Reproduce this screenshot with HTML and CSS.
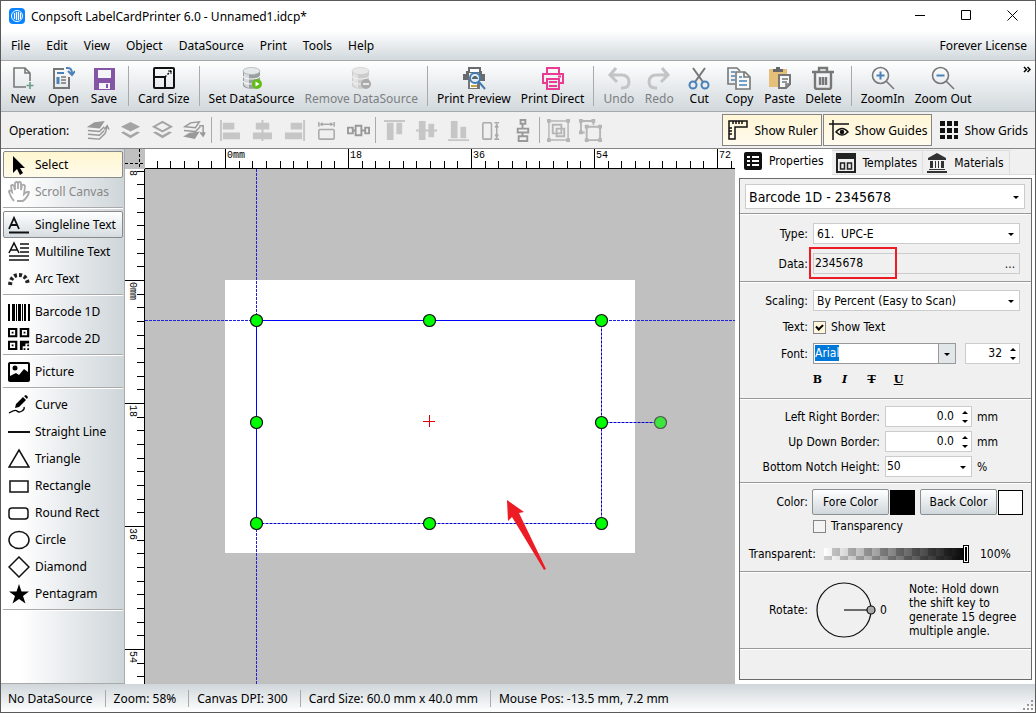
FILE: index.html
```html
<!DOCTYPE html>
<html lang="en">
    <head>
        <meta charset="utf-8">
        <title>Conpsoft LabelCardPrinter 6.0</title>
        <link rel="stylesheet" href="styles.css">
    </head>

    <body>
        <div class="window">
            <header class="titlebar">
                <svg class="app-icon" viewBox="0 0 16 16"><rect width="16" height="16" rx="4" fill="#0a84ff"/><circle cx="8" cy="8" r="5.5" fill="#0a84ff" stroke="#fff"/><path d="M5.5 5v6M7.5 4v8M9.5 4v8M11.5 5v6" stroke="#fff" stroke-width="1.2"/></svg>
                <span class="title">Conpsoft LabelCardPrinter 6.0 - Unnamed1.idcp*</span>
                <button class="win-button" aria-label="Minimize"><svg width="11" height="11"><path d="M0 5.500h10" stroke="#000"/></svg></button>
                <button class="win-button" aria-label="Maximize"><svg width="11" height="11"><path d="M.5.500h9v9h-9z" stroke="#000" fill="none"/></svg></button>
                <button class="win-button" aria-label="Close"><svg width="11" height="11"><path d="M.5.500l10 10M10.500.5l-10 10" stroke="#000"/></svg></button>
            </header>

            <nav class="menubar">
                <button>File</button>
                <button>Edit</button>
                <button>View</button>
                <button>Object</button>
                <button>DataSource</button>
                <button>Print</button>
                <button>Tools</button>
                <button>Help</button>
                <span class="license">Forever License</span>
            </nav>

            <div class="toolbar">
                <button class="tool"><svg viewBox="0 0 24 24" fill="none" stroke="#777" stroke-width="1.6"><path d="M15 21H3V2h11l5 5v8M14 2v5h5"/><path d="M19 16v7M15.500 19.500h7" stroke="#6a9c88"/></svg>New</button>
                <button class="tool"><svg viewBox="0 0 24 24" fill="none" stroke="#777" stroke-width="2"><path d="M13 3H3v19h15V11"/><path d="M6 7h7" stroke="#4a82b8"/><path d="M7 11v7" stroke="#4a82b8" stroke-width="3"/><path d="M10 11h5M10 14h5M10 17h5" stroke-width="1.500"/><path d="M15 2h2q4 0 4 6M17 5l4 4 3-4" stroke="#4a82b8"/></svg>Open</button>
                <button class="tool"><svg viewBox="0 0 24 24"><path d="M2 2h21v22H2z" fill="#8455a5"/><path d="M6 4h13v8H6zM7 17h11v6H7z" fill="#f4f5f6"/><path d="M14 18h2v4h-2z" fill="#8455a5"/></svg>Save</button>
                <i class="divider"></i>
                <button class="tool"><svg viewBox="0 0 24 24" fill="none" stroke="#111" stroke-width="2"><rect x="2" y="2" width="20" height="20" rx="1"/><path d="M2 11h11v11"/><path d="M13 11l7-7" stroke-width="1.500" stroke-dasharray="2 1.500"/><path d="M16 5h3v3" stroke-width="1"/></svg>Card Size</button>
                <i class="divider"></i>
                <button class="tool"><svg viewBox="0 0 24 24"><path d="M3 5v14c0 5 17 5 17 0V5z" fill="#9aa0a2"/><path d="M4 6v13q3 3 5 3V8z" fill="#d6dadb"/><ellipse cx="11.500" cy="5" rx="8.500" ry="3.500" fill="#e6e9ea" stroke="#a7adaf" stroke-width=".7"/><path d="M3 10c0 4 17 4 17 0M3 15c0 4 17 4 17 0" fill="none" stroke="#fff"/><circle cx="17" cy="18" r="5" fill="#62bd19"/><path d="M15.500 15.500v5l4-2.500z" fill="#fff"/></svg>Set DataSource</button>
                <button class="tool" disabled><svg viewBox="0 0 24 24"><path d="M3 5v14c0 5 17 5 17 0V5z" fill="#ccc"/><path d="M4 6v13q3 3 5 3V8z" fill="#e2e2e2"/><ellipse cx="11.500" cy="5" rx="8.500" ry="3.500" fill="#e8e8e8" stroke="#ccc" stroke-width=".7"/><path d="M3 10c0 4 17 4 17 0M3 15c0 4 17 4 17 0" fill="none" stroke="#f4f4f4"/><circle cx="17" cy="18" r="5" fill="#aaa"/><path d="M14 17h6v2h-6z" fill="#e8e8e8"/></svg>Remove DataSource</button>
                <i class="divider"></i>
                <button class="tool"><svg viewBox="0 0 24 24"><path d="M6 1h13v6H6z" fill="#686a6c"/><path d="M8 3h9v3H8z" fill="#fff"/><path d="M1 8h3V5h3v9H1zM17 5h3v3h3v7h-6z" fill="#686a6c"/><path d="M6 13h12v10H6z" fill="#737577"/><path d="M8 15h7v7H8z" fill="#fff"/><path d="M9 20h6" stroke="#c7a13d" stroke-width="2"/><circle cx="13" cy="12" r="5" fill="#e4edf3" stroke="#427cb5" stroke-width="2"/><path d="M10 13h6v-1l-2-2h-2l-2 2z" fill="#59636b"/><path d="M17 16l6 7" stroke="#427cb5" stroke-width="2"/></svg>Print Preview</button>
                <button class="tool"><svg viewBox="0 0 24 24" fill="none" stroke="#e93b91" stroke-width="2"><path d="M6 8V2h12v6M6 17H2V8h20v9h-4"/><path d="M6 13h12v10H6zM8 16h8M8 20h8M17 10.500h3"/></svg>Print Direct</button>
                <i class="divider"></i>
                <button class="tool" disabled><svg viewBox="0 0 24 24" fill="none" stroke="#c2c4c6" stroke-width="3"><path d="M9 2L3 9l7 7M3 9h11q8 0 8 7 0 6-7 6h-1"/></svg>Undo</button>
                <button class="tool" disabled><svg viewBox="0 0 24 24" fill="none" stroke="#c2c4c6" stroke-width="3"><path d="M15 2l6 7-7 7M21 9H10q-8 0-8 7 0 6 7 6h1"/></svg>Redo</button>
                <button class="tool"><svg viewBox="0 0 24 24" fill="none" stroke="#777" stroke-width="2"><path d="M6 2l10 14M18 2L8 16"/><circle cx="6" cy="19" r="3.500" stroke="#4a82b8"/><circle cx="18" cy="19" r="3.500" stroke="#4a82b8"/></svg>Cut</button>
                <button class="tool"><svg viewBox="0 0 24 24" fill="none" stroke="#777" stroke-width="1.600"><path d="M8 18H1V2h9l3 3"/><path d="M4 6h4M4 10h4M4 14h4" stroke="#4a82b8"/><path d="M9 6h9l5 5v12H9z" fill="#f7f8f8"/><path d="M17 6v5h5"/><path d="M12 11h3M12 15h8M12 19h8" stroke="#4a82b8"/></svg>Copy</button>
                <button class="tool"><svg viewBox="0 0 24 24"><path d="M1 3h18v18H1z" fill="#e6bf78"/><path d="M5 6V3h3V1h4v2h3v3z" fill="#666"/><path d="M11 9h11v9l-4 4h-7z" fill="#f7f8f8" stroke="#777" stroke-width="2"/><path d="M14 13h6M14 16h5M18 22v-4h4" stroke="#777" stroke-width="1.500" fill="none"/></svg>Paste</button>
                <button class="tool"><svg viewBox="0 0 24 24" fill="none" stroke="#777" stroke-width="2.400"><path d="M1 6h22M8 6V2h8v4M4 7v14q0 2 2 2h12q2 0 2-2V7M9 11v8M12 11v8M15 11v8"/></svg>Delete</button>
                <i class="divider"></i>
                <button class="tool"><svg viewBox="0 0 24 24" fill="none" stroke="#777" stroke-width="1.600"><circle cx="9.500" cy="9.500" r="8"/><path d="M15 15l8 8"/><path d="M9.500 5.500v8M5.500 9.500h8" stroke="#4a82b8" stroke-width="2"/></svg>ZoomIn</button>
                <button class="tool"><svg viewBox="0 0 24 24" fill="none" stroke="#777" stroke-width="1.600"><circle cx="9.500" cy="9.500" r="8"/><path d="M15 15l8 8"/><path d="M5.500 9.500h8" stroke="#4a82b8" stroke-width="2"/></svg>Zoom Out</button>
                <button class="overflow" aria-label="More"><svg width="8" height="7" fill="none" stroke="#000" stroke-width="1.500"><path d="M1 1l2.500 2.500L1 6M4.500 1L7 3.500 4.500 6"/></svg></button>
            </div>

            <div class="operations">
                <span class="op-label">Operation:</span>
                <button class="op" aria-label="Bring to front" disabled><svg viewBox="0 0 24 24" fill="none" stroke="#999" stroke-width="1.500"><path d="M2 8l6-4 9-1-4 6z" fill="#999"/><path d="M1 12l12 1 5-5M1 16l12 1 5-5M1 20l12 1 6-6 2-7M18 11l3-4 2 4"/></svg></button>
                <button class="op" aria-label="Bring forward" disabled><svg viewBox="0 0 24 24" fill="#a4a4a4"><path d="M12 3l10 5-10 5L2 8z"/><path d="M2 14l3-1 7 4 7-4 3 1-10 6z"/></svg></button>
                <button class="op" aria-label="Send backward" disabled><svg viewBox="0 0 24 24" fill="#a4a4a4"><path d="M12 3l9 5-9 5-9-5z" fill="none" stroke="#a4a4a4" stroke-width="2"/><path d="M2 14l3-1 7 4 7-4 3 1-10 6z"/></svg></button>
                <button class="op" aria-label="Send to back" disabled><svg viewBox="0 0 24 24" fill="none" stroke="#999" stroke-width="1.500"><path d="M2 8l6-4 9-1-4 6zM1 12l12 1 5-5M17 7h4v9"/><path d="M2 18l5-3 9-1-4 6z" fill="#999"/><path d="M18 14l3 4 2-4" fill="#999"/></svg></button>
                <i class="divider"></i>
                <button class="op" aria-label="Align left" disabled><svg viewBox="0 0 24 24" fill="#c6c6c6"><path d="M1 1h2v22H1z"/><path d="M4 4h12v7H4zM4 14h18v7H4z"/></svg></button>
                <button class="op" aria-label="Align center" disabled><svg viewBox="0 0 24 24" fill="#c6c6c6"><path d="M11 1h2v22h-2zM5 4h14v7H5zM2 14h20v7H2z"/></svg></button>
                <button class="op" aria-label="Align right" disabled><svg viewBox="0 0 24 24" fill="#c6c6c6"><path d="M21 1h2v22h-2zM8 4h12v7H8zM2 14h18v7H2z"/></svg></button>
                <button class="op" aria-label="Same width" disabled><svg viewBox="0 0 24 24" fill="none" stroke="#aaa" stroke-width="1.600"><rect x="4" y="11" width="16" height="10" rx="1"/><path d="M4 3v5M20 3v5M6 5.500h12M8 4L6 5.500 8 7M16 4l2 1.500L16 7"/></svg></button>
                <button class="op" aria-label="Space across" disabled><svg viewBox="0 0 24 24" fill="none" stroke="#999" stroke-width="2"><path d="M1 9h5v6H1zM9 7h6v10H9zM19 9h4v6h-4zM6 12h3M15 12h4"/></svg></button>
                <i class="divider"></i>
                <button class="op" aria-label="Align top" disabled><svg viewBox="0 0 24 24" fill="#c6c6c6"><path d="M1 1h22v2H1zM4 4h7v18H4zM14 4h6v12h-6z"/></svg></button>
                <button class="op" aria-label="Align middle" disabled><svg viewBox="0 0 24 24" fill="#c6c6c6"><path d="M1 11h22v2H1zM4 2h7v20H4zM14 5h6v14h-6z"/></svg></button>
                <button class="op" aria-label="Align bottom" disabled><svg viewBox="0 0 24 24" fill="#c6c6c6"><path d="M1 21h22v2H1zM4 2h7v18H4zM14 8h6v12h-6z"/></svg></button>
                <button class="op" aria-label="Same height" disabled><svg viewBox="0 0 24 24" fill="none" stroke="#aaa" stroke-width="1.600"><rect x="4" y="4" width="9" height="17" rx="1"/><path d="M16 4h5M16 21h5M18.500 6v13M17 9l1.500-3L20 9M17 16l1.500 3 1.500-3"/></svg></button>
                <button class="op" aria-label="Space down" disabled><svg viewBox="0 0 24 24" fill="none" stroke="#999" stroke-width="2"><path d="M10 1h5v4h-5zM7 10h11v4H7zM8 18h9v5H8zM12 5v5M12 14v4"/></svg></button>
                <i class="divider"></i>
                <button class="op" aria-label="Group" disabled><svg viewBox="0 0 24 24" fill="none" stroke="#b5b5b5" stroke-width="2"><path d="M2 2h20v20H2z" stroke-width="1.500"/><path d="M6 6h9v9H6zM10 10h8v8h-8z"/><path d="M0 0h4v4H0zM20 0h4v4h-4zM0 20h4v4H0zM20 20h4v4h-4z" fill="#b5b5b5" stroke="none"/></svg></button>
                <button class="op" aria-label="Ungroup" disabled><svg viewBox="0 0 24 24" fill="none" stroke="#b5b5b5" stroke-width="2"><path d="M6 14H2V2h13v4M8 8h14v14H8z"/><path d="M0 0h4v4H0zM13 0h4v4h-4zM0 12h4v4H0zM6 6h4v4H6zM20 6h4v4h-4zM6 20h4v4H6zM20 20h4v4h-4z" fill="#b5b5b5" stroke="none"/></svg></button>

                <div class="toggles">
                    <button class="toggle active"><svg viewBox="0 0 20 20" fill="none" stroke="#111" stroke-width="1.500"><path d="M1 1h18v6H7v12H1zM5 1v3M8 1v3M11 1v3M14 1v3M1 8h3M1 11h3M1 14h3"/></svg>Show Ruler</button>
                    <button class="toggle active"><svg viewBox="0 0 20 20" fill="none" stroke="#111" stroke-width="1.500"><path d="M0 4h20M4 0v20"/><path d="M7 12q6-7 12 0-6 6-12 0z"/><circle cx="13" cy="12" r="1.500" fill="#111"/></svg>Show Guides</button>
                    <button class="toggle"><svg viewBox="0 0 20 20" fill="#111"><path d="M1 1h5v5H1zM8 1h5v5H8zM15 1h4v5h-4zM1 8h5v5H1zM8 8h5v5H8zM15 8h4v5h-4zM1 15h5v4H1zM8 15h5v4H8zM15 15h4v4h-4z"/></svg>Show Grids</button>
                </div>
            </div>

            <main class="workspace">
                <aside class="sidebar">
                    <div class="group">
                        <button class="shape selected"><svg viewBox="0 0 22 22"><path d="M5 2v17l4-4 3 6 3-2-3-5h5z"/></svg>Select</button>
                        <button class="shape" disabled><svg viewBox="0 0 22 22" fill="none" stroke="#aaa" stroke-width="1.800"><path d="M6 20q-3-3-5-9 0-3 3 0L3 5q1-2 3 0l1 4V2q2-2 3 0v6-6q2-2 3 0v7l1-5q2-1 3 1l-1 8q3-3 5-2-1 5-6 9H9"/></svg>Scroll Canvas</button>
                    </div>
                    <div class="group">
                        <button class="shape hover"><svg viewBox="0 0 22 22" fill="none" stroke="#111" stroke-width="1.800"><path d="M1 15L6 4l5 11M3 11h6M1 18.500h20"/></svg>Singleline Text</button>
                        <button class="shape"><svg viewBox="0 0 22 22" fill="none" stroke="#111" stroke-width="1.600"><path d="M1 12L6 2l5 10M3 9h6M12 3h9M12 7h9M12 11h9M1 15h20M1 19h20"/></svg>Multiline Text</button>
                        <button class="shape"><svg viewBox="0 0 22 22" fill="none" stroke="#222" stroke-width="4"><path d="M2 17Q3 7 11 7t9 10" stroke-dasharray="3 2"/></svg>Arc Text</button>
                    </div>
                    <div class="group">
                        <button class="shape"><svg viewBox="0 0 22 22"><path d="M0 3h2v17H0zM4 3h3v17H4zM8 3h1v17H8zM10 3h3v17h-3zM14 3h1v17h-1zM16 3h2v17h-2zM20 3h2v17h-2z"/></svg>Barcode 1D</button>
                        <button class="shape"><svg viewBox="0 0 24 24"><path d="M1 1h8v8H1zM14 1h8v8h-8zM1 15h8v8H1z" fill="none" stroke="#000" stroke-width="2.400"/><path d="M4 4h2v2H4zM17 4h2v2h-2zM4 18h2v2H4zM13 14h10v3h-4v3h-3v4h-3zM21 18h2v2h-2zM17 22h2v2h-2zM21 22h2v2h-2z"/></svg>Barcode 2D</button>
                    </div>
                    <div class="group">
                        <button class="shape"><svg viewBox="0 0 22 22"><rect y="1" width="22" height="20" rx="2"/><path d="M2 15l6-3 3 2 5-6 4 3V3H2z" fill="#fff"/><circle cx="7" cy="7" r="2.500"/></svg>Picture</button>
                    </div>
                    <div class="group">
                        <button class="shape"><svg viewBox="0 0 22 22"><path d="M7 14l1-4 7-7 3 3-7 7zM16 2l2-1 2 2-1 2z"/><path d="M1 19q6-4 8-2t5 0 2-4" fill="none" stroke="#000" stroke-width="1.300"/></svg>Curve</button>
                        <button class="shape"><svg viewBox="0 0 22 22"><path d="M0 11h22" stroke="#111" stroke-width="2"/></svg>Straight Line</button>
                        <button class="shape"><svg viewBox="0 0 22 22"><path d="M11 2l10 17H1z" fill="none" stroke="#111" stroke-width="1.500"/></svg>Triangle</button>
                        <button class="shape"><svg viewBox="0 0 22 22"><path d="M2 6h18v11H2z" fill="none" stroke="#111" stroke-width="1.500"/></svg>Rectangle</button>
                        <button class="shape"><svg viewBox="0 0 22 22"><rect x="1" y="6" width="19" height="11" rx="3" fill="none" stroke="#111" stroke-width="1.500"/></svg>Round Rect</button>
                        <button class="shape"><svg viewBox="0 0 22 22"><ellipse cx="11" cy="11" rx="10" ry="8.500" fill="none" stroke="#111" stroke-width="1.500"/></svg>Circle</button>
                        <button class="shape"><svg viewBox="0 0 22 22"><path d="M11 1l10 10-10 10L1 11z" fill="none" stroke="#111" stroke-width="1.500"/></svg>Diamond</button>
                        <button class="shape"><svg viewBox="0 0 22 22"><path d="M11 1l2.500 7.500H21l-6 4.500 2.500 7.500L11 16l-6.500 4.500L7 13 1 8.500h7.500z"/></svg>Pentagram</button>
                    </div>
                </aside>

                <section class="editor">
                    <svg class="corner"><path d="M0 14.500h20M14.500 0v20" stroke="#000" stroke-dasharray="3 2"/></svg>

                    <svg class="ruler-top">
                        <defs>
                            <pattern id="ticks-x" x="80" width="123" height="20" patternUnits="userSpaceOnUse">
                                <path d="M.5 0v20M14.500 12v8M27.500 12v8M41.500 12v8M55.500 12v8M68.500 12v8M82.500 12v8M96.500 12v8M109.500 12v8" stroke="#000"/>
                            </pattern>
                        </defs>
                        <rect width="100%" height="20" fill="url(#ticks-x)"/>
                        <path d="M0 19.500h4000" stroke="#000"/>
                        <text x="82" y="9">0mm</text>
                        <text x="205" y="9">18</text>
                        <text x="328" y="9">36</text>
                        <text x="451" y="9">54</text>
                        <text x="574" y="9">72</text>
                    </svg>

                    <svg class="ruler-left">
                        <defs>
                            <pattern id="ticks-y" y="111" width="20" height="123" patternUnits="userSpaceOnUse">
                                <path d="M0 .5h20M12 14.500h8M12 27.500h8M12 41.500h8M12 55.500h8M12 68.500h8M12 82.500h8M12 96.500h8M12 109.500h8" stroke="#000"/>
                            </pattern>
                        </defs>
                        <rect width="20" height="100%" fill="url(#ticks-y)"/>
                        <path d="M19.500 0v4000" stroke="#000"/>
                        <text transform="translate(5 1) rotate(90)">8</text>
                        <text transform="translate(5 113) rotate(90)">0mm</text>
                        <text transform="translate(5 236) rotate(90)">18</text>
                        <text transform="translate(5 359) rotate(90)">36</text>
                        <text transform="translate(5 482) rotate(90)">54</text>
                    </svg>

                    <svg class="canvas">
                        <rect x="80" y="111" width="410" height="273" fill="#fff"/>
                        <!-- guides -->
                        <path d="M0 151.500h4000M111.500 0v4000" stroke="#2222dd" stroke-dasharray="3 1"/>
                        <!-- selected object -->
                        <path d="M111.500 354.500v-203h345" stroke="#00f" fill="none"/>
                        <path d="M456.500 151.500v203h-345M456.500 253.500h59" stroke="#0000c8" stroke-dasharray="3 1" fill="none"/>
                        <path d="M278 252.500h12M284.500 246v12" stroke="#e00000"/>
                        <g fill="#00ff00" stroke="#111" stroke-width="1.200">
                            <circle cx="111.500" cy="151.500" r="6"/>
                            <circle cx="284.500" cy="151.500" r="6"/>
                            <circle cx="456.500" cy="151.500" r="6"/>
                            <circle cx="111.500" cy="253.500" r="6"/>
                            <circle cx="456.500" cy="253.500" r="6"/>
                            <circle cx="111.500" cy="354.500" r="6"/>
                            <circle cx="284.500" cy="354.500" r="6"/>
                            <circle cx="456.500" cy="354.500" r="6"/>
                            <circle cx="515.500" cy="253.500" r="6" fill="#3ce63c" stroke="#555"/>
                        </g>
                        <path d="M362 331l17 12-5 1 27 56-2 1-32-53-4 4z" fill="#ed1c24"/>
                    </svg>
                </section>

                <aside class="panel">
                    <div class="tabs">
                        <button class="tab current"><svg viewBox="0 0 18 18"><rect width="18" height="18" rx="2" fill="#111"/><path d="M3 5h3M3 9h3M3 13h3M8 5h7M8 9h7M8 13h7" stroke="#fff" stroke-width="2"/></svg>Properties</button>
                        <button class="tab"><svg viewBox="0 0 20 20" fill="none" stroke="#222" stroke-width="2"><path d="M1 1h18v18H1z"/><path d="M1 4h18" stroke-width="4"/><path d="M4.500 10h4v6h-4zM11.500 10h4v6h-4z" stroke-width="1.500"/></svg>Templates</button>
                        <button class="tab"><svg viewBox="0 0 20 20" fill="#333"><path d="M10 0l9 5v2H1V5zM3 8h3v7H3zM8 8h1v7H8zM11 8h1v7h-1zM14 8h3v7h-3zM2 16h16v1H2zM0 18h20v2H0z"/></svg>Materials</button>
                    </div>

                    <div class="properties">
                        <div class="section object-section">
                            <span class="dropdown"><select class="object-select" aria-label="Object"><option>Barcode 1D - 2345678</option></select></span>
                        </div>

                        <div class="section data-section">
                            <div class="row">
                                <label for="type">Type:</label>
                                <span class="dropdown"><select id="type"><option>61.&nbsp; UPC-E</option></select></span>
                            </div>
                            <div class="row">
                                <label for="data">Data:</label>
                                <span class="data-field"><input id="data" value="2345678"><button aria-label="Edit data">...</button></span>
                            </div>
                        </div>

                        <div class="section text-section">
                            <div class="row">
                                <label for="scaling">Scaling:</label>
                                <span class="dropdown"><select id="scaling"><option>By Percent (Easy to Scan)</option></select></span>
                            </div>
                            <div class="row check-row">
                                <label for="showText">Text:</label>
                                <input type="checkbox" id="showText" checked>
                                <label for="showText">Show Text</label>
                            </div>
                            <div class="row">
                                <label for="font">Font:</label>
                                <span class="dropdown font-dropdown"><span class="marked">Arial</span><select id="font"><option label=" "></option></select></span>
                                <span class="spin font-size"><input aria-label="Font size" value="32"></span>
                            </div>
                            <div class="font-styles">
                                <button><b>B</b></button>
                                <button><i>I</i></button>
                                <button><s>T</s></button>
                                <button><u>U</u></button>
                            </div>
                        </div>

                        <div class="section border-section">
                            <div class="row">
                                <label for="lrBorder">Left Right Border:</label>
                                <span class="spin"><input id="lrBorder" value="0.0"></span>
                                <span>mm</span>
                            </div>
                            <div class="row">
                                <label for="udBorder">Up Down Border:</label>
                                <span class="spin"><input id="udBorder" value="0.0"></span>
                                <span>mm</span>
                            </div>
                            <div class="row">
                                <label for="notch">Bottom Notch Height:</label>
                                <span class="dropdown"><select id="notch"><option>50</option></select></span>
                                <span>%</span>
                            </div>
                        </div>

                        <div class="section color-section">
                            <div class="row color-row">
                                <span class="row-label">Color:</span>
                                <button class="color-button">Fore Color</button>
                                <span class="swatch fore"></span>
                                <button class="color-button">Back Color</button>
                                <span class="swatch"></span>
                            </div>
                            <div class="row check-row">
                                <span class="row-label"></span>
                                <input type="checkbox" id="transparency">
                                <label for="transparency">Transparency</label>
                            </div>
                            <div class="row slider-row">
                                <label for="opacity">Transparent:</label>
                                <input type="range" id="opacity" value="100">
                                <span>100%</span>
                            </div>
                        </div>

                        <div class="section rotate-section">
                            <span class="row-label">Rotate:</span>
                            <svg class="dial" viewBox="0 0 60 56" fill="none" stroke="#111" stroke-width="1.200"><circle cx="28" cy="28" r="27"/><path d="M28 28h27"/><circle cx="55" cy="28" r="4" fill="#aaa"/></svg>
                            <span class="angle">0</span>
                            <p>Note: Hold down<br>the shift key to<br>generate 15 degree<br>multiple angle.</p>
                        </div>
                    </div>
                </aside>
            </main>

            <footer class="statusbar">
                <span>No DataSource</span>
                <span>Zoom: 58%</span>
                <span>Canvas DPI: 300</span>
                <span>Card Size: 60.0 mm x 40.0 mm</span>
                <span>Mouse Pos: -13.5 mm, 7.2 mm</span>
                <svg class="grip" width="11" height="11" fill="#999"><path d="M8 0h2v2H8zM4 4h2v2H4zM8 4h2v2H8zM0 8h2v2H0zM4 8h2v2H4zM8 8h2v2H8z"/></svg>
            </footer>
        </div>
    </body>
</html>
```

FILE: styles.css
```css
* {
    box-sizing: border-box;
}

body {
    margin: 0;
    font-family: "Noto Sans", sans-serif;
    font-size: 12px;
    color: #000;
}

button, input, select {
    font: inherit;
    color: inherit;
    margin: 0;
}

button {
    padding: 0;
    border: 1px solid transparent;
    background: none;
    white-space: nowrap;
}

svg {
    flex: none;
}

.window {
    height: 100vh;
    display: flex;
    flex-direction: column;
    border: 1px solid #5a5a5a;
    background-color: #fff;
}

.titlebar {
    display: flex;
    align-items: center;
    height: 30px;
    padding-left: 8px;
}

.app-icon {
    width: 16px;
    height: 16px;
}

.title {
    flex: 1;
    margin-left: 6px;
}

.win-button {
    width: 46px;
    height: 28px;
}

.menubar {
    display: flex;
    align-items: center;
    height: 30px;
    padding: 0 8px 0 2px;
    border-bottom: 1px solid #a5a9ac;
    background: linear-gradient(#fff, #d1d8dc);
}

.menubar button {
    padding: 0 7px;
}

.license {
    margin-left: auto;
}

.toolbar {
    display: flex;
    height: 51px;
    padding: 0 2px;
    border-bottom: 1px solid #a5a9ac;
    background: linear-gradient(#fff, #d1d8dc);
}

.tool {
    display: flex;
    flex-direction: column;
    align-items: center;
    min-width: 40px;
    padding: 4px 4px 0;
    line-height: 18px;
}

.tool svg {
    width: 24px;
    height: 24px;
}

.tool:disabled {
    color: #7b7f82;
}

.divider {
    flex: none;
    width: 1px;
    margin: 5px 4px;
    background-color: #aaa;
}

.overflow {
    margin-left: auto;
    padding: 3px 1px;
    align-self: flex-start;
    line-height: 7px;
}

.operations {
    display: flex;
    align-items: center;
    height: 37px;
    padding-left: 8px;
    border-bottom: 1px solid #858585;
    background-color: #f0f0f0;
}

.operations .divider {
    height: 26px;
    margin: 0 2px 0 1px;
}

.op-label {
    width: 73px;
}

.op {
    display: flex;
    justify-content: center;
    width: 32px;
}

.op svg {
    width: 23px;
    height: 23px;
}

.toggles {
    display: flex;
    gap: 1px;
    margin-left: auto;
    padding-right: 3px;
}

.toggle {
    display: flex;
    align-items: center;
    gap: 6px;
    height: 32px;
    padding: 0 3px 0 5px;
}

.toggle svg {
    width: 20px;
    height: 20px;
}

.toggle.active {
    border-color: #858585;
    background: linear-gradient(#fff6d5, #fffbee);
}

.workspace {
    flex: 1;
    display: flex;
    min-height: 0;
}

.sidebar {
    width: 124px;
    padding: 2px 1px 0 2px;
    border-right: 1px solid #aaa;
    border-bottom: 1px solid #aaa;
    background: linear-gradient(to right, #fff 15%, #ced5d9);
}

.group {
    margin-bottom: 3px;
    padding-bottom: 2px;
    border-bottom: 1px solid #aaa;
    box-shadow: 0 1px #fff;
}

.shape {
    display: flex;
    align-items: center;
    gap: 5px;
    width: 100%;
    height: 27px;
    padding-left: 4px;
    border-radius: 2px;
}

.shape svg {
    width: 22px;
    height: 22px;
}

.shape:disabled {
    color: #888;
}

.shape.selected {
    border-color: #8a8a8a;
    background: linear-gradient(#fff6d0, #fffbea);
}

.shape.hover {
    border-color: #8a8a8a;
    background: linear-gradient(#fff, #d5dce0);
}

.editor {
    flex: 1;
    display: grid;
    grid-template-columns: 20px 1fr;
    grid-template-rows: 20px 1fr;
    min-width: 0;
}

.editor svg {
    width: 100%;
    height: 100%;
    overflow: hidden;
}

.editor text {
    font-family: "Liberation Mono", monospace;
    font-size: 10px;
}

.corner, .canvas {
    background-color: #c0c0c0;
}

.panel {
    display: flex;
    flex-direction: column;
    width: 300px;
    padding: 0 3px 4px 4px;
    background-color: #fff;
    font-family: "DejaVu Sans Condensed", "DejaVu Sans", sans-serif;
}

.tabs {
    display: flex;
    align-items: flex-end;
    height: 26px;
    margin: 0 -3px 3px -4px;
    border-bottom: 1px solid #ddd;
    background-color: #f0f0f0;
}

.tab {
    display: flex;
    align-items: center;
    gap: 7px;
    height: 24px;
    padding: 0 5px 0 4px;
    border-color: #ddd;
    border-left: none;
    border-bottom: none;
}

.tab svg {
    width: 20px;
    height: 20px;
}

.tab.current {
    height: 26px;
    margin-bottom: -1px;
    padding: 0 8px 3px 9px;
    border: none;
    background-color: #fff;
}

.tab.current svg {
    width: 18px;
    height: 18px;
}

.properties {
    flex: 1;
    border: 1px solid #6a6a6a;
    background-color: #f0f0f0;
}

.section {
    border-bottom: 1px solid #999;
    box-shadow: 0 1px #fff;
}

.row {
    display: flex;
    align-items: center;
    gap: 5px;
    height: 21px;
}

.row > label:first-child, .row-label {
    flex: none;
    width: 68px;
    text-align: right;
}

.dropdown {
    position: relative;
    display: block;
    flex: 1;
    height: 21px;
}

.dropdown select {
    display: block;
    width: 100%;
    height: 100%;
    padding: 0 3px;
    appearance: none;
    border: 1px solid #ccc;
    border-radius: 0;
    background-color: #fff;
}

.dropdown::after {
    content: "";
    position: absolute;
    top: 50%;
    right: 6px;
    margin-top: -1px;
    border: 3px solid transparent;
    border-top-color: #000;
    border-bottom: none;
}

.object-section {
    padding: 5px 6px 4px 5px;
}

.object-section .dropdown {
    height: 25px;
}

.object-section select {
    font-size: 14px;
}

.data-section {
    display: grid;
    gap: 9px;
    padding: 9px 11px 7px 0;
}

.data-field {
    position: relative;
    display: flex;
    flex: 1;
    height: 21px;
    border: 1px solid #ccc;
}

.data-field input {
    flex: 1;
    min-width: 0;
    padding: 0 1px 2px;
    border: none;
    background: none;
}

.data-field button {
    width: 18px;
    color: #111;
}

/* red frame around the value */
.data-field::before {
    content: "";
    position: absolute;
    top: -7px;
    left: -5px;
    width: 84px;
    height: 28px;
    border: 2px solid #ed1c24;
    pointer-events: none;
}

.text-section {
    display: grid;
    gap: 9px;
    padding: 8px 11px 12px 0;
}

.check-row {
    height: 14px;
}

input[type="checkbox"] {
    appearance: none;
    width: 13px;
    height: 13px;
    border: 1px solid #858585;
    background-color: #f4f4f4;
}

input[type="checkbox"]:checked {
    position: relative;
    background-color: #fff6dc;
}

input[type="checkbox"]:checked::after {
    content: "";
    position: absolute;
    top: 1px;
    left: 3px;
    width: 3px;
    height: 5px;
    border: solid #000;
    border-width: 0 2px 2px 0;
    transform: rotate(45deg);
}

.font-dropdown select {
    border-color: #999;
    background: linear-gradient(to left, #e1e6e8 16px, #999 16px, #999 17px, #fff 17px);
}

.marked {
    position: absolute;
    top: 2px;
    left: 2px;
    line-height: 16px;
    background-color: #0078d7;
    color: #fff;
}

.spin {
    position: relative;
    width: 87px;
    height: 21px;
}

.spin input {
    width: 100%;
    height: 100%;
    padding: 0 17px 2px 0;
    border: 1px solid #ccc;
    background-color: #fff;
    text-align: right;
}

.spin::before, .spin::after {
    content: "";
    position: absolute;
    right: 4px;
    border: 3px solid transparent;
}

.spin::before {
    top: 5px;
    border-top: none;
    border-bottom-color: #000;
}

.spin::after {
    bottom: 4px;
    border-bottom: none;
    border-top-color: #000;
}

.font-size {
    width: 55px;
    margin-left: 4px;
}

.font-styles {
    display: flex;
    height: 13px;
    padding-left: 64px;
    font-family: "DejaVu Serif", serif;
    font-size: 11px;
    font-weight: bold;
    line-height: 11px;
}

.font-styles button {
    width: 27px;
}

.border-section {
    display: grid;
    gap: 4px;
    padding: 7px 0 5px;
}

.border-section .row > label:first-child {
    width: 140px;
}

.border-section .dropdown {
    flex: none;
    width: 87px;
}

.border-section select {
    padding: 0 1px 2px;
}

.color-section {
    padding: 6px 0 8px;
}

.color-row {
    gap: 1px;
    height: 26px;
    margin-bottom: 4px;
}

.color-row .row-label {
    margin-right: 3px;
}

.color-button {
    width: 77px;
    height: 26px;
    border-color: #8a8f92;
    border-radius: 2px;
    background: linear-gradient(#fff, #d0d7db);
}

.swatch {
    width: 25px;
    height: 25px;
    border: 1px solid #000;
    background-color: #fff;
}

.swatch.fore {
    margin-right: 4px;
    background-color: #000;
}

.slider-row {
    height: 18px;
    margin-top: 12px;
}

.slider-row > label:first-child {
    width: 76px;
}

input[type="range"] {
    appearance: none;
    width: 149px;
    height: 18px;
    margin-right: 5px;
    background: none;
}

input[type="range"]::-webkit-slider-runnable-track {
    height: 12px;
    margin: 0 1px 0 3px;
    background:
        linear-gradient(to right, transparent, #000),
        repeating-conic-gradient(#ccc 0 25%, #fff 0 50%) 0 0 / 16px 16px;
}

input[type="range"]::-webkit-slider-thumb {
    appearance: none;
    width: 6px;
    height: 18px;
    margin-top: -3px;
    border: 1px solid #000;
    background-color: #fff;
    box-shadow: inset 0 0 0 1px #fff, inset 0 0 0 2px #000;
}

.rotate-section {
    display: flex;
    align-items: center;
    padding: 10px 8px 10px 0;
}

.dial {
    width: 60px;
    height: 56px;
    margin-left: 8px;
}

.angle {
    width: 33px;
    padding-left: 4px;
}

.rotate-section p {
    flex: 1;
    margin: 0;
    line-height: 14px;
}

.statusbar {
    display: flex;
    align-items: center;
    height: 28px;
    background: linear-gradient(#cfd6da, #fff);
}

.statusbar span {
    padding: 0 12px 0 8px;
    border-left: 1px solid #aaa;
}

.statusbar span:first-child {
    padding-left: 7px;
    border-left: none;
}

.grip {
    margin: auto 1px 1px auto;
}
```
